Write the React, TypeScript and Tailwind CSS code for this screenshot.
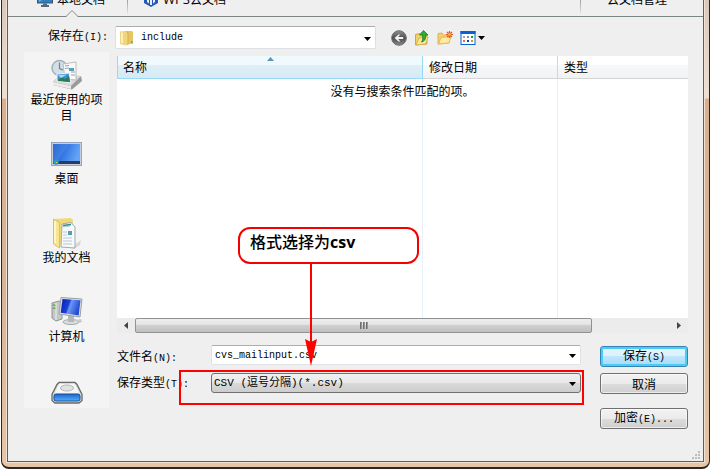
import type { ReactNode } from "react"
import clsx from "clsx"

function Latin({ children }: { children: ReactNode }) {
  return <span className="font-['Liberation_Mono',monospace] text-[10px]">{children}</span>
}

function Caret({ className }: { className?: string }) {
  return (
    <svg viewBox="0 0 7 4" className={clsx("h-1 w-[7px] pointer-events-none", className)} aria-hidden="true">
      <path d="M0 0h7L3.5 4z" fill="#000" />
    </svg>
  )
}

function MonitorIcon() {
  return (
    <svg viewBox="0 0 16 16" className="size-4 shrink-0" aria-hidden="true">
      <rect x="0.5" y="1.5" width="15" height="10.5" fill="#2f7fc4" stroke="#3c5468" />
      <path d="M2 11V3h11z" fill="#6db4e6" />
      <path d="M6 12.5h4V14h2v2H4v-2h2z" fill="#56697a" />
    </svg>
  )
}

function CloudIcon() {
  return (
    <svg viewBox="0 0 16 16" className="size-4 shrink-0" aria-hidden="true">
      <path d="M8 0l7 4v8l-7 4-7-4V4z" fill="#2459b5" />
      <path d="M4 5v6l2 1.5V5zM10 5v7.5l2-1.5V5zM7 4h2v10H7z" fill="#e6f0fc" />
    </svg>
  )
}

function FolderIcon() {
  return (
    <svg viewBox="0 0 16 16" className="size-4" aria-hidden="true">
      <path d="M7 1h6l1 1v12H7z" fill="#e6c767" />
      <path d="M1 1.5l6-.5 2 2v12l-2 .5L1 14z" fill="#efd67c" />
      <path d="M2 2.5h2V13H2z" fill="#fbf0bb" />
      <path d="M7 1l2 2v12" fill="none" stroke="#d6b04a" />
      <path d="M12 11h1.5v2H12z" fill="#55a5b8" />
    </svg>
  )
}

function BackIcon() {
  return (
    <svg viewBox="0 0 16 16" className="size-4" aria-hidden="true">
      <defs>
        <linearGradient id="back" x2="0" y2="1">
          <stop offset="0" stopColor="#929292" />
          <stop offset="0.5" stopColor="#4c4c4c" />
          <stop offset="1" stopColor="#8a8a8a" />
        </linearGradient>
      </defs>
      <circle cx="8" cy="8" r="7.3" fill="url(#back)" stroke="#6c6c6c" />
      <path d="M3.5 8l4-3.5h1.8L7.2 7h5v2h-5l2.1 2.500H7.500z" fill="#f2f2f2" />
    </svg>
  )
}

function UpIcon() {
  return (
    <svg viewBox="0 0 16 16" className="size-4" aria-hidden="true">
      <path d="M1.5 15V4.5l4-1 1 1.5H13v9z" fill="#f2d263" stroke="#cfa544" />
      <path d="M2 15l3-7 9-1-2.5 7z" fill="#fbe998" stroke="#d9b555" />
      <path d="M9.5.5L14 5h-2.500c.3 4-.5 6-4 7C9 10 9 8 8.500 5H5.500z" fill="#2fae35" stroke="#16791d" strokeWidth="0.8" />
    </svg>
  )
}

function NewFolderIcon() {
  return (
    <svg viewBox="0 0 16 16" className="size-4" aria-hidden="true">
      <path d="M1 14V3.5L5 3l1.500 2H12v8z" fill="#f2d263" stroke="#dab35a" />
      <path d="M1.500 14L4 7.500l10-1-2 6.500z" fill="#fdeaa0" stroke="#e0bc60" />
      <path d="M12.500 1v7M9 4.500h7M10 2l5 5M15 2l-5 5" stroke="#e8542a" strokeWidth="1.2" />
      <circle cx="12.500" cy="4.500" r="1.3" fill="#ffc34a" />
    </svg>
  )
}

function ViewIcon() {
  return (
    <svg viewBox="0 0 16 16" className="size-4" aria-hidden="true">
      <rect x="1" y="1.500" width="14" height="13" fill="#fff" stroke="#0a62d0" />
      <path d="M.5 1h15v3H.5z" fill="#0a62d0" />
      <path d="M3 6h2v2H3z" fill="#9aa6c8" />
      <path d="M7 6h2v2H7z" fill="#7d8fc9" />
      <path d="M11 6h2v2h-2z" fill="#18a022" />
      <path d="M3 10h2v2H3z" fill="#e8694a" />
      <path d="M7 10h2v2H7z" fill="#183c9c" />
      <path d="M11 10h2v2h-2z" fill="#c9a010" />
    </svg>
  )
}

function RecentIcon() {
  return (
    <svg viewBox="0 0 32 32" className="size-8" aria-hidden="true">
      <circle cx="8.5" cy="9" r="7.5" fill="#d3dfe6" stroke="#a3b1ba" strokeWidth="1.5" />
      <path d="M8.5 3.500v6L12 11" fill="none" stroke="#71838e" strokeWidth="1.2" />
      <path d="M2 23l7-7 21 1 1 5-10 8.500L2 26z" fill="#9a9a9a" />
      <path d="M2 23l7-7 21 1-10 10z" fill="#d9d9d9" />
      <path d="M2 23l18 4v3L2 26z" fill="#ececec" />
      <path d="M12 5l13-2v18l-11-1z" fill="#fafafa" stroke="#bcbcbc" />
      <path d="M14 7l4-.5M14 9.500l4-.5M20 13h4M20 16h4" stroke="#90a4b4" />
      <path d="M18 9h5v3h-5z" fill="#5e9fb8" />
      <path d="M6 15l12-1 2 10-14-2z" fill="#3b90d6" stroke="#f5f5f5" />
      <path d="M7 21l4-3 3 2 4-3 1 6-12-1z" fill="#2f7b55" />
      <path d="M7 16l9-.5-6 3.500z" fill="#a7dbf5" />
    </svg>
  )
}

function DesktopIcon() {
  return (
    <svg viewBox="0 0 32 32" className="size-8" aria-hidden="true">
      <defs>
        <linearGradient id="desk" x2="1" y2="0.3">
          <stop offset="0" stopColor="#1c5fce" />
          <stop offset="0.5" stopColor="#3478e4" />
          <stop offset="1" stopColor="#64a4f6" />
        </linearGradient>
      </defs>
      <rect x="0.5" y="4.5" width="30" height="23" fill="#c6cede" stroke="#98a4b8" />
      <rect x="2" y="6" width="27" height="20" fill="url(#desk)" />
      <path d="M2 6h16L7 22H2z" fill="#fff" opacity="0.08" />
      <path d="M2 23h27v3H2z" fill="#283d5e" />
      <circle cx="5" cy="24" r="2.8" fill="#249bc8" />
      <path d="M4 23h1v1H4z" fill="#f06a30" />
      <path d="M5 24h1v1H5z" fill="#f5d33c" />
    </svg>
  )
}

function DocumentsIcon() {
  return (
    <svg viewBox="0 0 32 32" className="size-8" aria-hidden="true">
      <path d="M20 31l10-8-1 5-6 4z" fill="#d8d8d8" />
      <path d="M3 2l17-1 2 2v23l-12 4z" fill="#f1d878" />
      <path d="M11 7l9-1.500 4 4.500v21l-14-1z" fill="#f7f9fa" stroke="#9fabb1" />
      <path d="M12 10l7-1M12 15h4M12 18h4M12 21h9M12 24h9M12 27h9" stroke="#b9c8d4" />
      <path d="M12 8.500l8-1" stroke="#2e8d87" strokeWidth="1.5" />
      <path d="M17 14h4v4h-4z" fill="#4fa0b5" />
      <path d="M2.500 2l6 3.500V31l-6-4z" fill="#f7e58f" stroke="#dcc05e" />
      <path d="M4 4v22" stroke="#fffad6" strokeWidth="1.5" />
    </svg>
  )
}

function ComputerIcon() {
  return (
    <svg viewBox="0 0 32 32" className="size-8" aria-hidden="true">
      <defs>
        <linearGradient id="screen" x2="1" y2="0.3">
          <stop offset="0" stopColor="#0820a0" />
          <stop offset="0.45" stopColor="#1b40dc" />
          <stop offset="0.55" stopColor="#6d96f4" />
          <stop offset="1" stopColor="#244bd2" />
        </linearGradient>
      </defs>
      <path d="M1 7l7-2 3 1v17l-6 2-4-3z" fill="#c3c7c8" stroke="#8e9495" />
      <path d="M2 9l3 .5M2 12l3 .5" stroke="#55b823" strokeWidth="1.5" />
      <path d="M5 7v17" stroke="#eceeee" />
      <ellipse cx="20" cy="26" rx="8" ry="2.500" fill="#dadddd" stroke="#a4a9aa" />
      <path d="M17 20h6v6h-6z" fill="#b2b7b8" />
      <path d="M25 24l5-1 1 3-4 1z" fill="#c5c9c9" />
      <path d="M10 1.500l21 1.500-2 18-21-3z" fill="#dde1e4" stroke="#9aa1a5" />
      <path d="M11.500 3l18 1.300L27.700 19.500l-18-2.700z" fill="url(#screen)" />
    </svg>
  )
}

function DriveIcon() {
  return (
    <svg viewBox="0 0 32 32" className="size-8" aria-hidden="true">
      <defs>
        <linearGradient id="drive" x2="0" y2="1">
          <stop offset="0" stopColor="#1c62d2" />
          <stop offset="1" stopColor="#4fb4fb" />
        </linearGradient>
      </defs>
      <path d="M8 7.500h16l2 2 5 10v6L28 28H4l-3-2.500v-6l5-10z" fill="#dedede" stroke="#68696a" strokeWidth="1.3" />
      <path d="M8.500 8.500h15l5 10h-25z" fill="#f7f7f7" />
      <ellipse cx="16" cy="13" rx="6.500" ry="3" fill="#e2e2e2" stroke="#b4b4b4" />
      <rect x="3" y="19" width="26" height="7" rx="2" fill="url(#drive)" stroke="#1e4e9c" />
    </svg>
  )
}

const places = [
  { label: "最近使用的项目", icon: <RecentIcon /> },
  { label: "桌面", icon: <DesktopIcon /> },
  { label: "我的文档", icon: <DocumentsIcon /> },
  { label: "计算机", icon: <ComputerIcon /> },
  { label: "", icon: <DriveIcon /> },
]

const greyButton =
  "h-[21px] rounded-[3px] border border-[#707070] bg-[linear-gradient(#f2f2f2,#ebebeb_50%,#dddddd_50%,#cfcfcf)] inset-ring inset-ring-white/60 leading-4"

function TabStrip() {
  return (
    <nav className="relative flex h-[17px] border-b border-[#7d8583]">
      <div className="flex h-4 flex-1 items-end overflow-hidden pb-[9px]">
        <a href="#local" className="flex w-[119px] shrink-0 items-end gap-1 pl-[29px] leading-4">
          <MonitorIcon />
          本地文档
        </a>
        <a href="#cloud" className="flex items-end gap-1 pl-4 leading-4">
          <CloudIcon />
          <span>
            <span className="font-['Open_Sans'] text-[13px]">WPS</span>云文档
          </span>
        </a>
        <a href="#manage" className="ml-auto w-24 leading-4">
          云文档管理
        </a>
      </div>
      <span className="absolute left-[119px] top-0 h-3.5 w-px bg-linear-to-b from-[#a0a0a0] to-[#e4e4e4]" />
      <span className="absolute right-[122px] top-0 h-3.5 w-px bg-linear-to-b from-[#a0a0a0] to-[#e4e4e4]" />
      <svg viewBox="0 0 12 7" className="absolute left-[58px] top-2.5 h-[7px] w-3" aria-hidden="true">
        <path d="M0 7L6 .5 12 7z" fill="#efefef" />
        <path d="M0 6.500L6 .5l6 6" fill="none" stroke="#858b89" />
      </svg>
    </nav>
  )
}

function Toolbar() {
  return (
    <div className="flex items-center pb-[3px] pl-10 pt-[9px]">
      <label htmlFor="folder" className="w-[67px] pb-1">
        保存在<Latin>(I):</Latin>
      </label>
      <div className="relative w-[261px]">
        <select
          id="folder"
          className="block h-[23px] w-full appearance-none rounded-[2px] border border-[#dcdfe3] border-t-[#abadb3] bg-white pl-[25px] font-['Liberation_Mono',monospace] text-[10px]"
        >
          <option>include</option>
        </select>
        <span className="pointer-events-none absolute left-1 top-1">
          <FolderIcon />
        </span>
        <Caret className="absolute right-[5px] top-[11px]" />
      </div>
      <div className="ml-[15px] flex items-center gap-[7px]">
        <button type="button" aria-label="后退"><BackIcon /></button>
        <button type="button" aria-label="上一级"><UpIcon /></button>
        <button type="button" aria-label="新建文件夹"><NewFolderIcon /></button>
        <button type="button" aria-label="视图" className="flex items-center gap-0.5">
          <ViewIcon />
          <Caret />
        </button>
      </div>
    </div>
  )
}

function FileList() {
  return (
    <div className="relative bg-white">
      <table className="w-full table-fixed border-separate border-spacing-0 text-left">
        <thead>
          <tr className="h-[23px] leading-4">
            <th className="relative w-[306px] border-x border-b border-[#96d9f9] bg-[linear-gradient(#f0f9fd_40%,#deeff7_40%,#d6eaf4)] pl-[5px] font-normal">
              名称
              <svg viewBox="0 0 7 4" className="absolute left-[149px] top-px h-1 w-[7px]" aria-hidden="true">
                <path d="M0 4L3.500 0 7 4z" fill="#5c96b4" />
              </svg>
            </th>
            <th className="w-[135px] border-b border-r border-[#d5d5d5] bg-[linear-gradient(#ffffff_40%,#f7f8fa_40%,#f0f2f4)] pl-1.5 font-normal">
              修改日期
            </th>
            <th className="border-b border-[#d5d5d5] bg-[linear-gradient(#ffffff_40%,#f7f8fa_40%,#f0f2f4)] pl-1.5 font-normal">
              类型
            </th>
          </tr>
        </thead>
        <tbody>
          <tr className="h-[239px]">
            <td className="border-r border-[#e8f1fb]" />
            <td className="border-r border-[#e8f1fb]" />
            <td />
          </tr>
        </tbody>
      </table>
      <p className="absolute inset-x-0 top-[27px] text-center leading-4">没有与搜索条件匹配的项。</p>
      <div className="flex h-[15px] items-center justify-between bg-[#ececec] px-[7px]">
        <svg viewBox="0 0 4 7" className="h-[7px] w-1" aria-hidden="true">
          <path d="M4 0v7L0 3.500z" fill="#444" />
        </svg>
        <div className="ml-[7px] mr-[85px] flex h-[15px] flex-1 items-center justify-center gap-px rounded-[2px] border border-[#929292] bg-[linear-gradient(#eeeeee,#e2e2e2_50%,#cfcfcf_50%,#c0c0c0)]">
          <span className="h-[7px] w-0.5 bg-linear-to-r from-[#5c5c5c] to-[#a8a8a8]" />
          <span className="h-[7px] w-0.5 bg-linear-to-r from-[#5c5c5c] to-[#a8a8a8]" />
          <span className="h-[7px] w-0.5 bg-linear-to-r from-[#5c5c5c] to-[#a8a8a8]" />
        </div>
        <svg viewBox="0 0 4 7" className="h-[7px] w-1" aria-hidden="true">
          <path d="M0 0v7l4-3.500z" fill="#444" />
        </svg>
      </div>
      <Callout />
    </div>
  )
}

function Callout() {
  return (
    <div className="absolute left-[121px] top-[171px] z-10">
      <div className="w-[181px] rounded-xl border-2 border-[#f40000] bg-white px-2.5 pb-2 pt-px font-['Open_Sans','Noto_Sans_CJK_SC',sans-serif] text-base font-bold leading-6">
        <span className="font-medium">格式选择为</span>csv
      </div>
      <svg viewBox="0 0 12 102" className="ml-[67px] h-[102px] w-3" aria-hidden="true">
        <path d="M6 0v82" stroke="#f00" strokeWidth="2" />
        <path d="M0 75l6 3 6-3-6 27z" fill="#f00" />
      </svg>
    </div>
  )
}

function SaveForm() {
  return (
    <form className="flex gap-[19px] pt-3">
      <div className="flex flex-1 flex-col gap-2">
        <div className="relative flex h-5 items-center">
          <label htmlFor="name" className="w-[94px] shrink-0 pt-1">
            文件名<Latin>(N):</Latin>
          </label>
          <input
            id="name"
            defaultValue="cvs_mailinput.csv"
            className="h-5 min-w-0 flex-1 rounded-[2px] border border-[#dfe2e6] border-t-[#abadb3] bg-white pl-[3px] font-['Liberation_Mono',monospace] text-[10px]"
          />
          <Caret className="absolute right-[5px] top-[9px]" />
        </div>
        <div className="relative flex h-5 items-center">
          <label htmlFor="type" className="w-[94px] shrink-0">
            保存类型<Latin>(T):</Latin>
          </label>
          <select
            id="type"
            className="h-5 min-w-0 flex-1 appearance-none rounded-[3px] border border-[#707070] bg-[linear-gradient(#f0f0f0,#e8e8e8_50%,#dadada_50%,#cdcdcd)] pl-0.5 font-['Liberation_Mono','Noto_Sans_CJK_SC',monospace] text-[11px] leading-4"
          >
            <option>CSV (逗号分隔)(*.csv)</option>
          </select>
          <Caret className="absolute right-[5px] top-[9px]" />
          <span className="pointer-events-none absolute -bottom-3 -right-[3px] -top-[3px] left-[62px] border-2 border-[#f00]" />
        </div>
      </div>
      <div className="flex w-[88px] flex-col pt-px">
        <button
          type="submit"
          className="h-[21px] rounded-[3px] border border-[#3c7fb1] bg-[linear-gradient(#eaf6fd,#d9f0fc_50%,#bee6fd_50%,#a7d9f5)] leading-4 inset-ring-2 inset-ring-[#48cdf6]"
        >
          保存<Latin>(S)</Latin>
        </button>
        <button type="button" className={clsx(greyButton, "mt-1.5")}>
          取消
        </button>
        <button type="button" className={clsx(greyButton, "mt-3.5")}>
          加密<Latin>(E)...</Latin>
        </button>
      </div>
    </form>
  )
}

export default function App() {
  return (
    <div className="ml-px overflow-hidden rounded-b-lg border-x border-b-2 border-[#2c2521] bg-[linear-gradient(#d9c8ba,#ebe0d5_98px,#d8b08f_99px,#d8b598_300px,#e5c6a6)] px-[5px] pb-[5px] font-['Noto_Sans_CJK_SC',sans-serif] text-xs text-black">
      <main className="relative border-x border-b border-[#6b5b4c] bg-[#efefef] pb-8 outline outline-[#f3e2d2]">
        <TabStrip />
        <Toolbar />
        <div className="flex gap-2 pl-4 pr-[15px]">
          <aside className="h-[356px] w-[85px] shrink-0 overflow-hidden bg-[#f4f4f4] pt-[7px]">
            {places.map((place, i) => (
              <button key={i} type="button" className="flex h-[79px] w-full flex-col items-center px-1 leading-4">
                {place.icon}
                {place.label}
              </button>
            ))}
          </aside>
          <div className="min-w-0 flex-1 pt-1">
            <FileList />
            <SaveForm />
          </div>
        </div>
        <svg viewBox="0 0 8 8" className="absolute bottom-0.5 right-[3px] size-2" aria-hidden="true">
          <path d="M6 0h2v2H6zM3 3h2v2H3zM6 3h2v2H6zM0 6h2v2H0zM3 6h2v2H3zM6 6h2v2H6z" fill="#bdbdbd" />
        </svg>
      </main>
    </div>
  )
}
